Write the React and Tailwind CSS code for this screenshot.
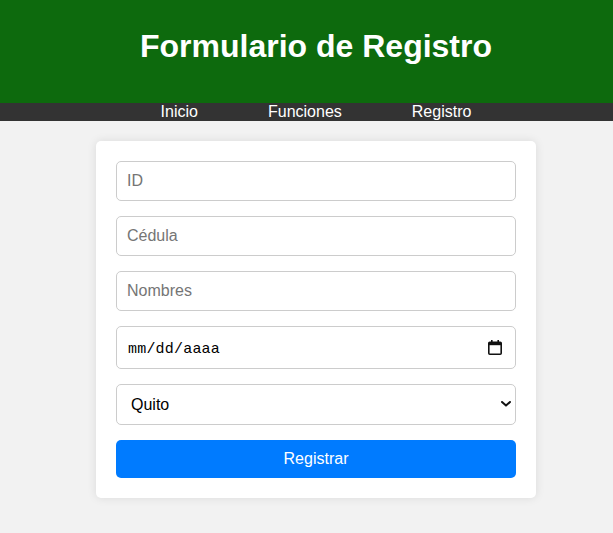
import { useState } from "react";

function CalendarIcon() {
  return (
    <svg width="14" height="15" viewBox="0 0 14 15" fill="none" aria-hidden="true">
      <rect x="3" y="0" width="1.6" height="3" fill="#111" />
      <rect x="9.4" y="0" width="1.6" height="3" fill="#111" />
      <rect x="0.8" y="2.2" width="12.4" height="12" rx="1" stroke="#111" strokeWidth="1.6" />
      <rect x="0.8" y="2.2" width="12.4" height="3" fill="#111" />
    </svg>
  );
}

function Chevron() {
  return (
    <svg width="10" height="6" viewBox="0 0 10 6" fill="none" aria-hidden="true">
      <path d="M1 1 L5 4.6 L9 1" stroke="#111" strokeWidth="2" strokeLinecap="round" strokeLinejoin="round" />
    </svg>
  );
}

const inputClass =
  "h-[40px] w-full rounded-[5px] border border-[#ccc] bg-white px-[10px] text-[16px] text-black placeholder:text-[#757575] focus:outline-none";

function App() {
  const [city, setCity] = useState("Quito");

  return (
    <div className="min-h-[533px] w-full overflow-hidden bg-[#f2f2f2] font-['Liberation_Sans',Arial,sans-serif]">
      <div className="w-[632px]">
        <header className="h-[103px] bg-[#0d6a0d] pt-[28px] text-center">
          <h1 className="text-[32px] font-bold leading-[36px] text-white">Formulario de Registro</h1>
        </header>

        <nav className="flex h-[18px] justify-center gap-[70px] bg-[#333] text-[16px] leading-[18px] text-white">
          <a href="#">Inicio</a>
          <a href="#">Funciones</a>
          <a href="#">Registro</a>
        </nav>

        <div className="flex justify-center pt-[20px]">
          <form
            onSubmit={(event) => event.preventDefault()}
            className="flex w-[440px] flex-col gap-[15px] rounded-[5px] bg-white p-[20px] shadow-[0_0_10px_rgba(0,0,0,0.1)]"
          >
            <input type="text" placeholder="ID" className={inputClass} />
            <input type="text" placeholder="Cédula" className={inputClass} />
            <input type="text" placeholder="Nombres" className={inputClass} />

            <div className="flex h-[43px] items-center justify-between rounded-[5px] border border-[#ccc] bg-white pl-[11px] pr-[13px]">
              <span className="mt-[5px] font-['Liberation_Mono',monospace] text-[15px] tracking-[0.2px] text-black">
                mm/dd/aaaa
              </span>
              <CalendarIcon />
            </div>

            <div className="relative">
              <select
                value={city}
                onChange={(event) => setCity(event.target.value)}
                className="h-[41px] w-full appearance-none rounded-[5px] border border-[#ccc] bg-white pl-[14px] text-[16px] text-black focus:outline-none"
              >
                <option>Quito</option>
                <option>Guayaquil</option>
                <option>Cuenca</option>
              </select>
              <span className="pointer-events-none absolute right-[5px] top-[17px]">
                <Chevron />
              </span>
            </div>

            <button
              type="submit"
              className="h-[38px] w-full rounded-[5px] bg-[#007bff] text-[16px] text-white"
            >
              Registrar
            </button>
          </form>
        </div>
      </div>
    </div>
  );
}

export default App;
